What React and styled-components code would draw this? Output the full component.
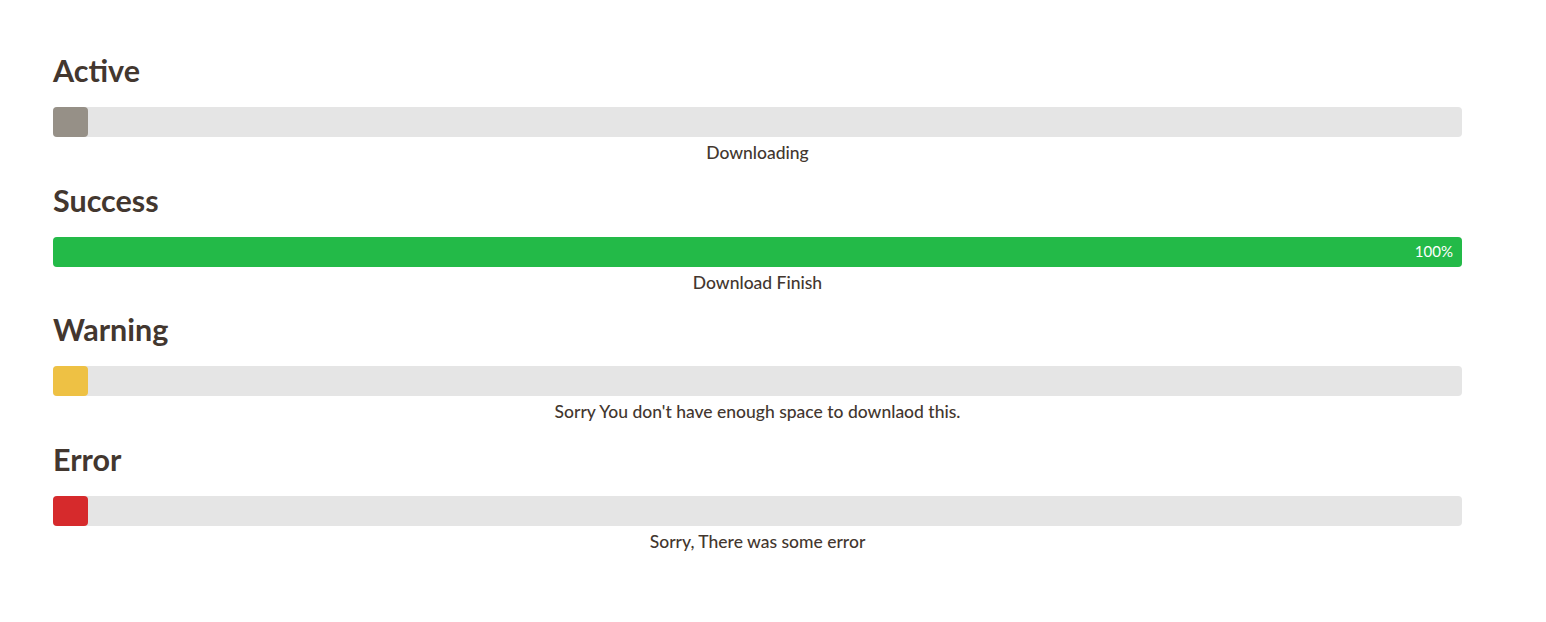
import React from 'react';
import styled, { createGlobalStyle } from 'styled-components';

const GlobalStyle = createGlobalStyle`
    body{
        margin:0;
        background:#fff;
        font-family:Lato,"Liberation Sans",sans-serif;
        color:#43372f;
    }
`;

const Page = styled.div`
    padding:52px 0 0 53px;
    width:1409px;
`;

const Section = styled.section`
    display:flex;
    flex-direction:column;
    height:129.7px;
`;

const Title = styled.h2`
    margin:0;
    font-size:30.5px;
    font-weight:700;
    line-height:37px;
    height:55px;
    color:#43372f;
`;

const Track = styled.div`
    position:relative;
    height:30px;
    border-radius:4px;
    background-color:#e5e5e5;
`;

const Fill = styled.div`
    height:100%;
    min-width:35px;
    border-radius:4px;
    background-color:${p => p.color};
    display:flex;
    align-items:center;
    justify-content:flex-end;
    padding-right:${p => (p.showValue ? '9px' : '0')};
    box-sizing:border-box;
`;

const Value = styled.span`
    color:#fff;
    font-size:15px;
    line-height:1;
`;

const Label = styled.div`
    text-align:center;
    font-size:17.5px;
    font-weight:500;
    line-height:31px;
    color:#43372f;
`;

const bars = [
    { title: 'Active', color: '#969087', percent: 0, label: 'Downloading' },
    { title: 'Success', color: '#23ba48', percent: 100, label: 'Download Finish', showValue: true },
    { title: 'Warning', color: '#eec144', percent: 0, label: "Sorry You don't have enough space to downlaod this." },
    { title: 'Error', color: '#d62a2c', percent: 0, label: 'Sorry, There was some error' },
];

const App = () => {
  return (
    <Page>
        <GlobalStyle/>
        {bars.map(b => (
            <Section key={b.title}>
                <Title>{b.title}</Title>
                <Track>
                    <Fill color={b.color} showValue={b.showValue} style={{width: b.percent + '%'}}>
                        {b.showValue && <Value>{b.percent}%</Value>}
                    </Fill>
                </Track>
                <Label>{b.label}</Label>
            </Section>
        ))}
    </Page>
  )
}

export default App
